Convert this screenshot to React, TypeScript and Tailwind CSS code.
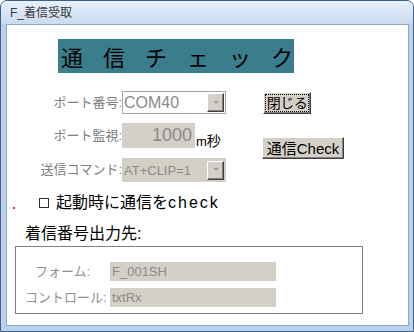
const font = "font-['Liberation_Sans','Noto_Sans_CJK_JP',sans-serif]";

const DropButton = () => (
  <div className="w-[17px] h-[19px] flex items-center justify-center bg-[#d4d0c8] border border-t-white border-l-white border-r-[#404040] border-b-[#404040] shadow-[inset_-1px_-1px_0_#808080]">
    <svg width="6" height="4" viewBox="0 0 6 4">
      <path d="M0 0h6L3 3z" fill="#a0a0a0" />
    </svg>
  </div>
);

export default function App() {
  return (
    <div className={`w-[414px] h-[332px] flex flex-col overflow-hidden rounded-t-[7px] border border-[#3f5f8a] bg-[#b9d1ea] ${font}`}>
      {/* title bar */}
      <div className="h-[23px] shrink-0 flex items-center pl-[9px] pt-[1px] text-[12px] text-[#3a3a3a] bg-gradient-to-b from-[#e8f0fb] to-[#c9dbf0]">
        F_着信受取
      </div>

      <div className="flex-1 ml-[5px] mr-[4px] mb-[5px] border border-[#90a8c8] bg-white flex flex-col">
        {/* banner */}
        <div className="mt-[14px] ml-[51px] w-[236px] h-[34px] bg-[#3a7d8c] flex items-center pl-[3px] whitespace-nowrap text-[22px] text-black font-['Noto_Sans_CJK_JP',sans-serif]">
          <span className="tracking-[20px]">通信チェッ</span>
          <span>ク</span>
        </div>

        {/* settings */}
        <div className="mt-[18px] flex">
          <div className="w-[255px] flex flex-col">
            <div className="h-[23px] flex items-center">
              <div className="w-[115px] text-right text-[13px] text-[#808080]">ポート番号:</div>
              <div className="w-[104px] h-full flex items-center justify-between border border-[#a5a5a5] bg-white pl-[1px] pr-[1px]">
                <span className="text-[16px] text-[#8a8a8a] leading-none">COM40</span>
                <DropButton />
              </div>
            </div>

            <div className="mt-[9px] h-[25px] flex items-center">
              <div className="w-[115px] text-right text-[13px] text-[#808080]">ポート監視:</div>
              <div className="w-[73px] h-full flex items-center justify-end pr-[3px] bg-[#d4d0c8] text-[18px] text-[#8a8a8a]">1000</div>
              <div className="self-end ml-[1px] flex items-end leading-none text-black">
                <span className="text-[13px]">m</span>
                <span className="text-[14px]">秒</span>
              </div>
            </div>

            <div className="mt-[10px] h-[24px] flex items-center">
              <div className="w-[115px] text-right text-[13px] text-[#808080]">送信コマンド:</div>
              <div className="w-[104px] h-full flex items-center justify-between bg-[#d4d0c8] pl-[2px] pr-[2px]">
                <span className="text-[13px] text-[#8a8a8a] leading-none">AT+CLIP=1</span>
                <DropButton />
              </div>
            </div>
          </div>

          <div className="flex flex-col items-start">
            <button className="mt-[1px] ml-[1px] w-[48px] h-[22px] p-[1px] bg-[#d4d0c8] border border-t-white border-l-white border-r-[#404040] border-b-[#404040] shadow-[inset_-1px_-1px_0_#808080]">
              <div className="w-full h-full flex items-center justify-center whitespace-nowrap border border-dotted border-black text-[14px] tracking-[-0.5px] text-black leading-none">
                閉じる
              </div>
            </button>
            <button className="mt-[23px] w-[82px] h-[22px] flex items-center justify-center whitespace-nowrap bg-[#d4d0c8] border border-t-white border-l-white border-r-[#404040] border-b-[#404040] shadow-[inset_-1px_-1px_0_#808080] text-[15px] text-black leading-none">
              通信Check
            </button>
          </div>
        </div>

        {/* startup check */}
        <div className="mt-[13px] h-[16px] flex items-center">
          <span className="ml-[6px] self-end mb-[2px] w-[2px] h-[2px] bg-[#c04040]" />
          <span className="ml-[24px] w-[10px] h-[10px] border border-[#303030] bg-white" />
          <span className="ml-[7px] text-[16px] text-black leading-none whitespace-nowrap">
            起動時に通信を<span className="tracking-[2px]">check</span>
          </span>
        </div>

        {/* output destination */}
        <div className="mt-[14px] ml-[18px] h-[18px] flex items-center text-[16px] text-black">着信番号出力先:</div>

        <div className="mt-[3px] ml-[8px] w-[348px] h-[68px] border border-[#808080] flex flex-col">
          <div className="mt-[15px] h-[19px] flex items-center">
            <div className="w-[94px] pl-[19px] text-[13px] text-[#909090]">フォーム:</div>
            <div className="w-[166px] h-full flex items-center pl-[2px] bg-[#d4d0c8] text-[13px] text-[#8a8a8a]">F_001SH</div>
          </div>
          <div className="mt-[7px] h-[19px] flex items-center">
            <div className="w-[94px] pl-[9px] text-[13px] text-[#909090]">コントロール:</div>
            <div className="w-[166px] h-full flex items-center pl-[2px] bg-[#d4d0c8] text-[13px] text-[#8a8a8a]">txtRx</div>
          </div>
        </div>
      </div>
    </div>
  );
}
